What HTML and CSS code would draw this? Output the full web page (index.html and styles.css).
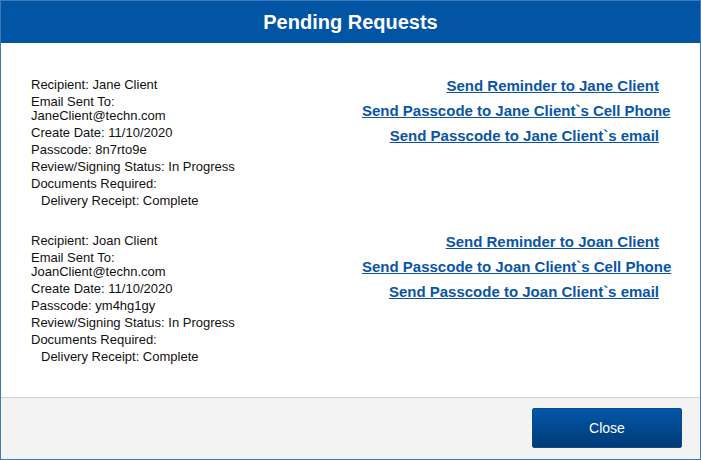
FILE: index.html
```html
<!DOCTYPE html>
<html>
<head>
<meta charset="utf-8">
<link rel="stylesheet" href="styles.css">
</head>
<body>
<div class="dialog">
  <div class="header">Pending Requests</div>
  <div class="content">
    <div class="request">
      <div class="details">
        <div class="field">Recipient: Jane Client</div>
        <div class="field">Email Sent To:<br>JaneClient@techn.com</div>
        <div class="field">Create Date: 11/10/2020</div>
        <div class="field">Passcode: 8n7rto9e</div>
        <div class="field">Review/Signing Status: In Progress</div>
        <div class="field">Documents Required:</div>
        <div class="field indent">Delivery Receipt: Complete</div>
      </div>
      <div class="actions">
        <div class="action"><a href="#">Send Reminder to Jane Client</a></div>
        <div class="action"><a href="#">Send Passcode to Jane Client`s Cell Phone</a></div>
        <div class="action"><a href="#">Send Passcode to Jane Client`s email</a></div>
      </div>
    </div>
    <div class="request">
      <div class="details">
        <div class="field">Recipient: Joan Client</div>
        <div class="field">Email Sent To:<br>JoanClient@techn.com</div>
        <div class="field">Create Date: 11/10/2020</div>
        <div class="field">Passcode: ym4hg1gy</div>
        <div class="field">Review/Signing Status: In Progress</div>
        <div class="field">Documents Required:</div>
        <div class="field indent">Delivery Receipt: Complete</div>
      </div>
      <div class="actions">
        <div class="action"><a href="#">Send Reminder to Joan Client</a></div>
        <div class="action"><a href="#">Send Passcode to Joan Client`s Cell Phone</a></div>
        <div class="action"><a href="#">Send Passcode to Joan Client`s email</a></div>
      </div>
    </div>
  </div>
  <div class="footer">
    <button class="close-btn">Close</button>
  </div>
</div>
</body>
</html>
```

FILE: styles.css
```css
html, body {
  margin: 0;
  padding: 0;
  background: #ffffff;
}
.dialog {
  box-sizing: border-box;
  width: 701px;
  height: 460px;
  border: 1px solid #3d7ab8;
  display: flex;
  flex-direction: column;
  font-family: "Liberation Sans", Arial, sans-serif;
  background: #ffffff;
}
.header {
  height: 42px;
  background: #0254a5;
  color: #ffffff;
  font-size: 20px;
  font-weight: bold;
  line-height: 42px;
  text-align: center;
}
.content {
  flex: 1;
  padding: 35px 41px 0 30px;
}
.request {
  display: grid;
  grid-template-columns: 1fr 297px;
  margin-bottom: 23px;
}
.field {
  font-size: 13px;
  line-height: 14px;
  color: #111111;
  margin-bottom: 3px;
}
.indent {
  padding-left: 10px;
}
.actions {
  text-align: right;
}
.action {
  font-size: 15px;
  font-weight: bold;
  line-height: 15px;
  margin-bottom: 10px;
  white-space: nowrap;
}
.action a {
  color: #0a55a6;
  text-decoration: underline;
}
.footer {
  box-sizing: border-box;
  height: 62px;
  border-top: 1px solid #d3d3d3;
  background: #f3f3f3;
  display: flex;
  justify-content: flex-end;
  align-items: flex-start;
  padding: 10px 18px 0 0;
}
.close-btn {
  width: 150px;
  height: 40px;
  border: 1px solid #0a4a8e;
  border-radius: 2px;
  background: linear-gradient(to bottom, #0457a8, #003a76);
  color: #ffffff;
  font-family: "Liberation Sans", Arial, sans-serif;
  font-size: 14px;
  cursor: pointer;
}
```
